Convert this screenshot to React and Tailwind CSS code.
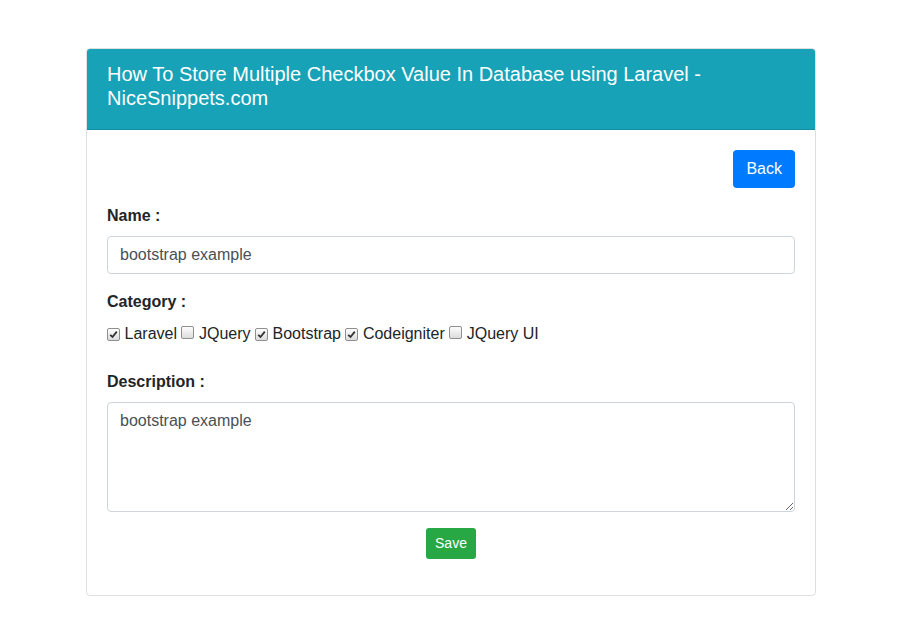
import React from "react";

// fake native checkbox (old chrome look)
function Box({ checked }) {
  return (
    <span className="inline-flex items-center justify-center w-[13px] h-[13px] rounded-[2px] border border-[#8f8f8f] bg-gradient-to-b from-[#fdfdfd] to-[#dcdcdc] align-[0px] mr-[4.5px]">
      {checked && (
        <svg width="9" height="9" viewBox="0 0 9 9">
          <path d="M1.2 4.8 L3.5 7 L7.8 1.6" fill="none" stroke="#333" strokeWidth="1.8" />
        </svg>
      )}
    </span>
  );
}

const CATEGORIES = [
  { name: "Laravel", checked: true },
  { name: "JQuery", checked: false },
  { name: "Bootstrap", checked: true },
  { name: "Codeigniter", checked: true },
  { name: "JQuery UI", checked: false },
];

export default function App() {
  return (
    <div className="min-h-[636px] bg-white pt-[48px] text-[16px] text-[#212529] font-['Liberation_Sans',Arial,sans-serif]">
      <div className="ml-[86px] w-[730px] border border-black/[.125] rounded-[4px] overflow-hidden">
        {/* header */}
        <div className="bg-[#17a2b8] px-[20px] pt-[13px] pb-[19px] border-b border-black/[.125]">
          <h5 className="text-white text-[20px] leading-[24px] font-normal">
            How To Store Multiple Checkbox Value In Database using Laravel - NiceSnippets.com
          </h5>
        </div>

        {/* body */}
        <div className="p-[20px]">
          <div className="flex justify-end">
            <button className="bg-[#007bff] text-white rounded-[4px] px-[13px] h-[38px] leading-[24px]">
              Back
            </button>
          </div>

          <div className="mt-[16px]">
            <label className="block font-bold leading-[24px] mb-[8px]">Name :</label>
            <input
              defaultValue="bootstrap example"
              className="block w-full h-[38px] px-[12px] border border-[#ced4da] rounded-[4px] text-[#495057] outline-none"
            />
          </div>

          <div className="mt-[16px]">
            <label className="block font-bold leading-[24px] mb-[8px]">Category :</label>
            <div className="leading-[24px]">
              {CATEGORIES.map((c, i) => (
                <React.Fragment key={c.name}>
                  {i > 0 && " "}
                  <Box checked={c.checked} />
                  {c.name}
                </React.Fragment>
              ))}
            </div>
          </div>

          <div className="mt-[24px]">
            <label className="block font-bold leading-[24px] mb-[8px]">Description :</label>
            <textarea
              defaultValue="bootstrap example"
              className="block w-full h-[110px] px-[12px] py-[6px] border border-[#ced4da] rounded-[4px] text-[#495057] leading-[24px] outline-none"
            />
          </div>

          <div className="flex justify-center mt-[16px] mb-[16px]">
            <button className="bg-[#28a745] text-white text-[14px] rounded-[3px] px-[9px] h-[31px] leading-[21px]">
              Save
            </button>
          </div>
        </div>
      </div>
    </div>
  );
}
